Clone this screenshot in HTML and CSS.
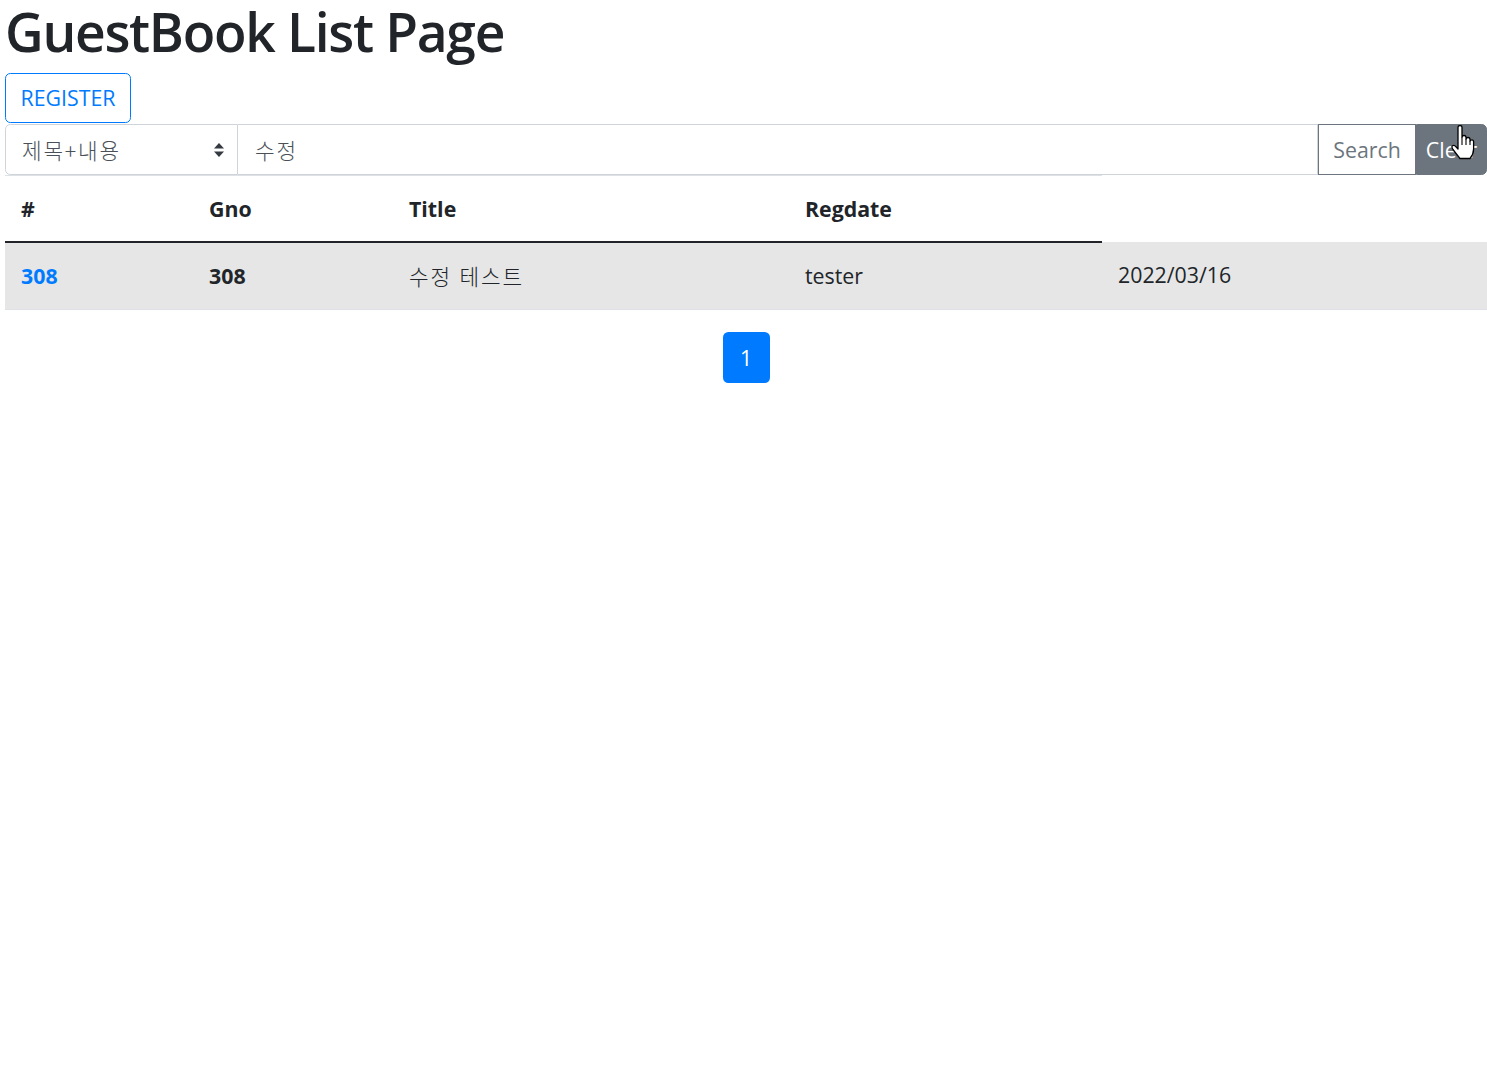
FILE: index.html
```html
<!DOCTYPE html>
<html lang="ko">
<head>
<meta charset="utf-8">
<title>GuestBook List Page</title>
<link rel="stylesheet" href="styles.css">
</head>
<body>
<div class="page">
  <h1 class="title">GuestBook List Page</h1>
  <div class="actions">
    <button class="btn btn-outline-primary" type="button">REGISTER</button>
  </div>
  <form class="input-group">
    <div class="select">
      <span class="select-text ko">제목+내용</span>
      <svg class="select-arrow" width="12" height="18" viewBox="0 0 12 18"><path d="M6 2 L11 7.5 H1 Z" fill="#343a40"/><path d="M6 16 L11 10.5 H1 Z" fill="#343a40"/></svg>
    </div>
    <div class="input"><span class="ko">수정</span></div>
    <button class="btn btn-outline-secondary btn-search" type="button">Search</button>
    <button class="btn btn-secondary btn-clear" type="button">Clear</button>
    <svg class="cursor" width="26" height="36" viewBox="0 0 26 36">
      <path d="M8 2.5 C8 1.2 9 0.5 10 0.5 C11 0.5 12 1.2 12 2.5 V12 C12.3 11 13.2 10.5 14 10.5 C15 10.5 16 11.2 16 12.5 V14 C16.3 13 17.2 12.5 18 12.5 C19 12.5 20 13.2 20 14.5 V16 C20.3 15.2 21 14.8 21.8 14.8 C22.8 14.8 23.6 15.6 23.6 16.8 V24 C23.6 28 22 31 20 33.5 H10 C8 31 5.5 28 3 24.5 C2 23 1.5 21.5 2.5 20.8 C3.6 20 5 20.6 6 21.8 L8 24 Z" fill="#fff" stroke="#000" stroke-width="1.3" stroke-linejoin="round"/>
      <path d="M12 12 V20 M16 14 V20 M20 16 V20" stroke="#000" stroke-width="1.1" fill="none"/>
    </svg>
  </form>
  <table class="table">
    <colgroup>
      <col class="c1"><col class="c2"><col class="c3"><col class="c4"><col class="c5">
    </colgroup>
    <thead>
      <tr><th>#</th><th>Gno</th><th>Title</th><th>Regdate</th></tr>
    </thead>
    <tbody>
      <tr class="row-active">
        <th class="num"><a href="#">308</a></th>
        <th>308</th>
        <td><span class="ko">수정 테스트</span></td>
        <td>tester</td>
        <td>2022/03/16</td>
      </tr>
    </tbody>
  </table>
  <ul class="pagination">
    <li class="page-item active"><a class="page-link" href="#">1</a></li>
  </ul>
</div>
</body>
</html>
```
FILE: styles.css
```css
html, body {
  margin: 0;
  padding: 0;
  background: #fff;
}
body {
  font-family: "Open Sans", "Noto Sans", "Noto Sans CJK KR", sans-serif;
  font-size: 21.33px;
  line-height: 1.5;
  color: #212529;
}
.page {
  padding-left: 5px;
}
.title {
  font-size: 53.33px;
  font-weight: 600;
  line-height: 64px;
  margin: 0 0 9px 0;
  letter-spacing: -1.3px;
}
.ko {
  font-family: "Noto Sans CJK KR", sans-serif;
  letter-spacing: 1.8px;
  font-weight: 300;
}
.actions {
  height: 51px;
}
.btn {
  font-family: inherit;
  font-size: 21.33px;
  line-height: 32px;
  padding: 8px 16px;
  border: 1.33px solid transparent;
  border-radius: 5.33px;
  background: transparent;
  cursor: pointer;
  margin: 0;
}
.btn-outline-primary {
  color: #007bff;
  border-color: #007bff;
  height: 50px;
  width: 126px;
  padding: 0;
}
.input-group {
  position: relative;
  display: flex;
  height: 51px;
  margin: 0;
}
.select {
  width: 233px;
  box-sizing: border-box;
  border: 1.33px solid #ced4da;
  border-radius: 5.33px 0 0 5.33px;
  display: flex;
  align-items: center;
  justify-content: space-between;
  padding: 0 12px 0 16px;
  color: #495057;
}
.select-text {
  font-size: 21.33px;
}
.input {
  flex: 1;
  box-sizing: border-box;
  border: 1.33px solid #ced4da;
  border-left: none;
  display: flex;
  align-items: center;
  padding: 0 17px;
  color: #495057;
}
.btn-outline-secondary {
  color: #6c757d;
  border-color: #6c757d;
  border-radius: 0;
  width: 98px;
  padding: 0;
  height: 51px;
}
.btn-secondary {
  color: #fff;
  background: #6c757d;
  border-color: #6c757d;
  border-radius: 0 5.33px 5.33px 0;
  width: 71px;
  padding: 0;
  height: 51px;
}
.cursor {
  position: absolute;
  right: 11px;
  top: 1px;
}
.table {
  width: 100%;
  border-collapse: collapse;
  table-layout: fixed;
  margin-bottom: 22px;
}
.c1 { width: 188px; }
.c2 { width: 200px; }
.c3 { width: 396px; }
.c4 { width: 313px; }
.c5 { width: auto; }
.table th, .table td {
  padding: 17px 16px 16px;
  text-align: left;
  vertical-align: top;
  line-height: 32px;
}
.table thead th {
  font-weight: 700;
  border-top: 1.33px solid #dee2e6;
  border-bottom: 2.67px solid #212529;
  padding-top: 17px;
  padding-bottom: 16px;
}
.table tbody th {
  font-weight: 700;
}
.row-active th, .row-active td {
  background: #e6e6e6;
  border-bottom: 1.33px solid #dee2e6;
}
.num a {
  color: #007bff;
  text-decoration: none;
}
.pagination {
  display: flex;
  justify-content: center;
  list-style: none;
  margin: 0;
  padding: 0;
}
.page-link {
  display: block;
  width: 47px;
  height: 51px;
  box-sizing: border-box;
  line-height: 51px;
  text-align: center;
  background: #007bff;
  color: #fff;
  border-radius: 5.33px;
  text-decoration: none;
}
```
